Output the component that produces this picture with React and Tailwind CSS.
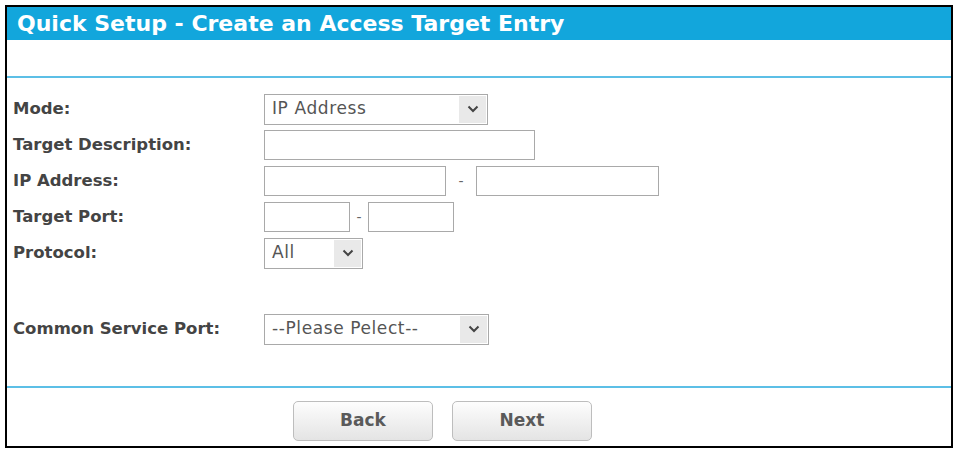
import React from 'react';

const font = { fontFamily: '"DejaVu Sans", Verdana, sans-serif' };

function Chevron() {
  return (
    <svg className="w-[12px] h-[8px]" viewBox="0 0 12 8" fill="none" stroke="#444" strokeWidth={2}>
      <path d="M1.5 1.5L6 6l4.5-4.5" />
    </svg>
  );
}

function Select({ value, width }) {
  return (
    <div className={`flex items-stretch h-[31px] border border-[#a9a9a9] bg-white ${width}`}>
      <div className="flex-1 flex items-center pl-[7px] text-[17px] tracking-[0.6px] text-[#555] whitespace-nowrap">{value}</div>
      <div className="w-[27px] my-[1px] mr-[1px] bg-[#e9e9e9] flex items-center justify-center">
        <Chevron />
      </div>
    </div>
  );
}

function Input({ width }) {
  return <div className={`h-[30px] border border-[#a9a9a9] bg-white ${width}`} />;
}

function Dash() {
  return <span className="text-[14px] text-[#666] leading-none">-</span>;
}

function Row({ label, children }) {
  return (
    <div className="flex items-center h-[30px]">
      <div className="w-[251px] text-[16.5px] font-bold text-[#444] whitespace-nowrap">{label}</div>
      <div className="flex items-center">{children}</div>
    </div>
  );
}

function Button({ children }) {
  return (
    <button className="w-[140px] h-[40px] rounded-[5px] border border-[#bdbdbd] bg-gradient-to-b from-[#fdfdfd] to-[#e4e4e4] text-[17px] font-bold text-[#5a5a5a]">
      {children}
    </button>
  );
}

export default function App() {
  return (
    <div className="w-[954px] h-[451px] bg-white pt-[5px] pl-[5px]" style={font}>
      <div className="w-[948px] h-[443px] border-2 border-black flex flex-col">
        <div className="h-[33px] bg-[#12a6dc] flex items-center pl-[10px] text-white font-bold text-[22px]">
          Quick Setup - Create an Access Target Entry
        </div>
        <div className="h-[36px]" />
        <div className="h-[2px] bg-[#5cbfe6]" />

        <div className="flex flex-col gap-[6px] pt-[16px] pl-[6px]">
          <Row label="Mode:">
            <Select value="IP Address" width="w-[224px]" />
          </Row>
          <Row label="Target Description:">
            <Input width="w-[271px]" />
          </Row>
          <Row label="IP Address:">
            <Input width="w-[182px]" />
            <div className="w-[30px] flex justify-center"><Dash /></div>
            <Input width="w-[183px]" />
          </Row>
          <Row label="Target Port:">
            <Input width="w-[86px]" />
            <div className="w-[18px] flex justify-center"><Dash /></div>
            <Input width="w-[86px]" />
          </Row>
          <Row label="Protocol:">
            <Select value="All" width="w-[99px]" />
          </Row>
        </div>

        <div className="flex flex-col pt-[46px] pl-[6px]">
          <Row label="Common Service Port:">
            <Select value="--Please Pelect--" width="w-[225px]" />
          </Row>
        </div>

        <div className="h-[42px]" />
        <div className="h-[2px] bg-[#5cbfe6]" />

        <div className="flex justify-center gap-[19px] pt-[13px] pr-[73px]">
          <Button>Back</Button>
          <Button>Next</Button>
        </div>
      </div>
    </div>
  );
}
